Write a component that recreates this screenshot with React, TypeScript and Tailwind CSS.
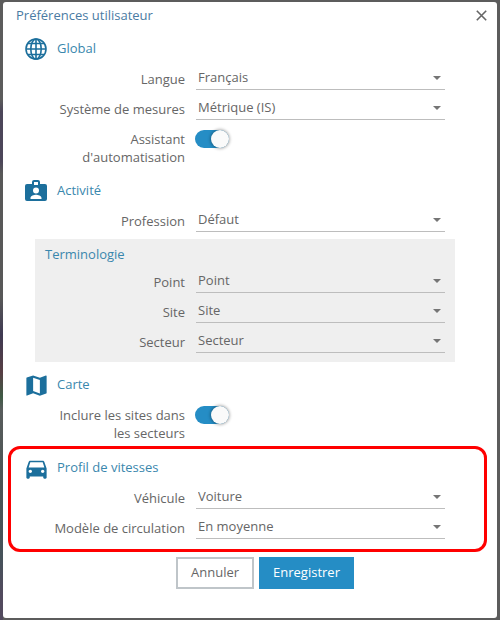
import { useState, type ReactNode } from 'react'
import { MdMap, MdDirectionsCar } from 'react-icons/md'

function GlobeIcon() {
  return (
    <svg viewBox="0 0 22 22" className="size-[22px]" fill="none" stroke="currentColor" strokeWidth="1.6">
      <circle cx="11" cy="11" r="10" />
      <ellipse cx="11" cy="11" rx="5.2" ry="10" />
      <path d="M11 1v20M1 11h20M2.8 5.5h16.4M2.8 16.5h16.4" />
    </svg>
  )
}

function BadgeIcon() {
  return (
    <svg viewBox="0 0 22 22" className="size-[22px]" fill="currentColor">
      <path
        fillRule="evenodd"
        d="M2 4h5V2a2 2 0 0 1 2-2h4a2 2 0 0 1 2 2v2h5a2 2 0 0 1 2 2v13a2 2 0 0 1-2 2H2a2 2 0 0 1-2-2V6a2 2 0 0 1 2-2zM9 2v3h4V2zM11 7.5a3 3 0 1 0 0 6a3 3 0 1 0 0-6zM5.5 19h11v-1c0-2-3.5-3.2-5.5-3.2s-5.5 1.2-5.5 3.2z"
      />
    </svg>
  )
}

function SectionHeader({ icon, title }: { icon: ReactNode; title: string }) {
  return (
    <div className="flex h-[22px] items-center gap-[9px] pl-[21px]">
      <span className="flex size-6 items-center justify-center text-[#1c6f9c]">{icon}</span>
      <h2 className="text-[#3a87ad]">{title}</h2>
    </div>
  )
}

function SelectField({ id, label, options }: { id: string; label: string; options: string[] }) {
  return (
    <div className="flex h-[30px] items-end gap-[11px]">
      <label htmlFor={id} className="w-[182px] shrink-0 pb-px text-right leading-[20px]">
        {label}
      </label>
      <div className="relative mr-[52px] min-w-0 flex-1">
        <select
          id={id}
          className="block h-[26px] w-full appearance-none border-b border-[#bdbdbd] bg-transparent pt-[2px] pr-6 pl-[2px] outline-none"
        >
          {options.map((option) => (
            <option key={option}>{option}</option>
          ))}
        </select>
        <svg viewBox="0 0 8 4" className="pointer-events-none absolute top-3 right-1 h-1 w-2" fill="#757575">
          <path d="M0 0h8L4 4z" />
        </svg>
      </div>
    </div>
  )
}

function ToggleField({ id, label }: { id: string; label: string }) {
  const [checked, setChecked] = useState(true)
  return (
    <div className="mt-[10px] flex items-start gap-[10px]">
      <label htmlFor={id} className="w-[182px] shrink-0 pl-14 text-right leading-[18px]">
        {label}
      </label>
      <span className="relative h-[18px] w-[34px]">
        <input
          id={id}
          type="checkbox"
          role="switch"
          checked={checked}
          onChange={(e) => setChecked(e.target.checked)}
          className="peer block h-[18px] w-[34px] appearance-none rounded-full bg-[#bdbdbd] checked:bg-[#258dc5]"
        />
        <span className="pointer-events-none absolute top-0 left-0 size-[18px] rounded-full bg-[#fafafa] shadow-[0_0_3px_1px_rgba(0,0,0,0.3)] peer-checked:left-4" />
      </span>
    </div>
  )
}

export default function App() {
  return (
    <div className="min-h-screen bg-[#5c5c5c] bg-[linear-gradient(#5c5c5c_16%,#4c4659_18%,#4c4659_26%,#585858_28%,#585858_48%,#3f3a52_54%,#573e44_60%,#3f5a45_64%,#585c5c_66%,#4c5555_78%,#46525a_90%,#524a5e_96%)] bg-[length:3px_100%] bg-no-repeat px-[3px] py-[2px] font-['Open_Sans',sans-serif] text-[13px] text-[#666666]">
      <form role="dialog" aria-labelledby="title" className="rounded-[3px] bg-white pb-[29px]">
        <header className="flex h-[27px] items-center justify-between pr-[10px] pl-[13px]">
          <h1 id="title" className="text-[#4a7ba3]">
            Préférences utilisateur
          </h1>
          <button type="button" aria-label="Fermer" className="text-[#666666]">
            <svg viewBox="0 0 11 11" className="size-[11px]" fill="none" stroke="currentColor" strokeWidth="1.6">
              <path d="M.8.8l9.4 9.4M10.2.8L.8 10.2" />
            </svg>
          </button>
        </header>

        <section className="mt-[9px]">
          <SectionHeader icon={<GlobeIcon />} title="Global" />
          <SelectField id="langue" label="Langue" options={['Français', 'English']} />
          <SelectField id="mesures" label="Système de mesures" options={['Métrique (IS)', 'Impérial']} />
          <ToggleField id="assistant" label="Assistant d'automatisation" />
        </section>

        <section className="mt-[14px]">
          <SectionHeader icon={<BadgeIcon />} title="Activité" />
          <SelectField id="profession" label="Profession" options={['Défaut']} />
          <div className="mt-[7px] mr-[42px] ml-8 bg-[#efefef] pt-[6px] pb-[9px]">
            <h3 className="pl-[10px] leading-[18px] text-[#3a87ad]">Terminologie</h3>
            <div className="-mr-[42px] -ml-8">
              <SelectField id="point" label="Point" options={['Point']} />
              <SelectField id="site" label="Site" options={['Site']} />
              <SelectField id="secteur" label="Secteur" options={['Secteur']} />
            </div>
          </div>
        </section>

        <section className="mt-3">
          <SectionHeader icon={<MdMap size={27} className="shrink-0" />} title="Carte" />
          <ToggleField id="inclure" label="Inclure les sites dans les secteurs" />
        </section>

        <section className="mt-1 mr-[10px] ml-[5px] rounded-[12px] border-3 border-[#ff0000] pt-2 pb-[10px]">
          <div className="-mr-[13px] -ml-2">
            <SectionHeader icon={<MdDirectionsCar size={27} className="shrink-0" />} title="Profil de vitesses" />
            <SelectField id="vehicule" label="Véhicule" options={['Voiture', 'Camion']} />
            <SelectField id="circulation" label="Modèle de circulation" options={['En moyenne']} />
          </div>
        </section>

        <footer className="mt-[5px] flex justify-center gap-[5px] pl-[30px]">
          <button type="button" className="h-8 border-2 border-[#bfc5c9] px-[13px]">
            Annuler
          </button>
          <button type="submit" className="h-8 bg-[#258dc5] px-[14px] font-medium text-white">
            Enregistrer
          </button>
        </footer>
      </form>
    </div>
  )
}
